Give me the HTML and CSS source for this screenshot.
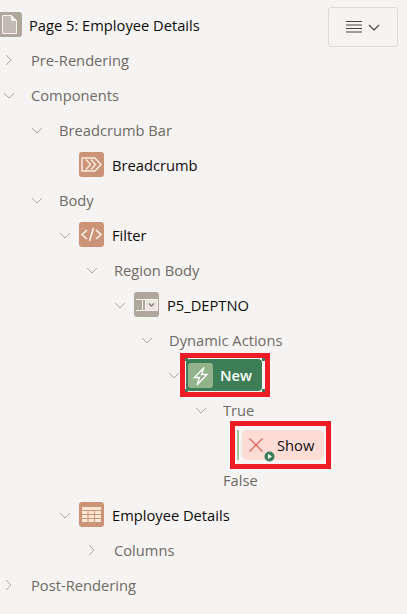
FILE: index.html
```html
<!DOCTYPE html>
<html lang="en">
<head>
<meta charset="UTF-8">
<meta name="viewport" content="width=device-width, initial-scale=1.0">
<title>Page Designer Tree</title>
<link rel="stylesheet" href="styles.css">
</head>
<body>

<div class="tree">
    <button class="menu-btn" type="button">
        <svg width="16" height="12" viewBox="0 0 16 12"><path d="M0 .5h16M0 4h16M0 7.500h16M0 11h16" stroke="#444" fill="none"/></svg>
        <svg width="12" height="7" viewBox="0 0 12 7"><path d="M1 1l5 5 5-5" stroke="#444" stroke-width="1.200" fill="none"/></svg>
    </button>

    <div class="row page-row">
        <span class="icon icon-grey">
            <svg width="25" height="25" viewBox="0 0 25 25"><path d="M5.500 3.500h9l5 5v13h-14z" fill="#c2bbb1" stroke="#f6f3ef"/><path d="M14.500 3.500v5h5" fill="#f6f3ef" stroke="#f6f3ef"/></svg>
        </span>
        <span class="node-name">Page 5: Employee Details</span>
    </div>

    <div class="row lvl-0">
        <svg class="toggle" viewBox="0 0 18 18"><path d="M6 4l5 5-5 5"/></svg>
        <span class="label">Pre-Rendering</span>
    </div>
    <div class="row lvl-0">
        <svg class="toggle" viewBox="0 0 18 18"><path d="M4 7l5 5 5-5"/></svg>
        <span class="label">Components</span>
    </div>
    <div class="row lvl-1">
        <svg class="toggle" viewBox="0 0 18 18"><path d="M4 7l5 5 5-5"/></svg>
        <span class="label">Breadcrumb Bar</span>
    </div>
    <div class="row lvl-2">
        <span class="toggle"></span>
        <span class="icon icon-brown">
            <svg width="25" height="25" viewBox="0 0 25 25" fill="none" stroke="#fbeee0" stroke-width="1.400"><path d="M3 6h13l6 6.500-6 6.500H3z"/><path d="M7 7.500l4.500 5-4.500 5M12 7.500l4.500 5-4.500 5"/></svg>
        </span>
        <span class="node-name">Breadcrumb</span>
    </div>
    <div class="row lvl-1">
        <svg class="toggle" viewBox="0 0 18 18"><path d="M4 7l5 5 5-5"/></svg>
        <span class="label">Body</span>
    </div>
    <div class="row lvl-2">
        <svg class="toggle" viewBox="0 0 18 18"><path d="M4 7l5 5 5-5"/></svg>
        <span class="icon icon-brown">
            <svg width="25" height="25" viewBox="0 0 25 25" fill="none" stroke="#fdf3e8" stroke-width="1.600"><path d="M8 8l-5 4.500 5 4.500M17 8l5 4.500-5 4.500M14.500 6l-4 13"/></svg>
        </span>
        <span class="node-name">Filter</span>
    </div>
    <div class="row lvl-3">
        <svg class="toggle" viewBox="0 0 18 18"><path d="M4 7l5 5 5-5"/></svg>
        <span class="label">Region Body</span>
    </div>
    <div class="row lvl-4">
        <svg class="toggle" viewBox="0 0 18 18"><path d="M4 7l5 5 5-5"/></svg>
        <span class="icon icon-grey">
            <svg width="25" height="25" viewBox="0 0 25 25"><path d="M2 7.500h10M2 18.500h10M8.500 7.500v11" stroke="#f6f3ef" fill="none"/><rect x="11.500" y="7.500" width="12" height="11" fill="#e9e5e0" stroke="#f6f3ef"/><path d="M15 11.500l2.500 2.500 2.500-2.500" stroke="#857c72" stroke-width="1.300" fill="none"/></svg>
        </span>
        <span class="node-name">P5_DEPTNO</span>
    </div>
    <div class="row lvl-5">
        <svg class="toggle" viewBox="0 0 18 18"><path d="M4 7l5 5 5-5"/></svg>
        <span class="label">Dynamic Actions</span>
    </div>
    <div class="row lvl-6">
        <svg class="toggle" viewBox="0 0 18 18"><path d="M4 7l5 5 5-5"/></svg>
        <div class="mark mark-new">
            <span class="pill pill-new">
                <span class="icon icon-green">
                    <svg width="25" height="25" viewBox="0 0 25 25"><path d="M16 4.500L6.500 14.500h5L9 22l10-10.500h-5.500z" fill="none" stroke="#fff" stroke-width="1.300"/></svg>
                </span>
                <span class="pill-text">New</span>
            </span>
        </div>
    </div>
    <div class="row lvl-7">
        <svg class="toggle" viewBox="0 0 18 18"><path d="M4 7l5 5 5-5"/></svg>
        <span class="label">True</span>
    </div>
    <div class="row lvl-8">
        <div class="mark mark-show">
            <span class="action-bar"></span>
            <span class="pill pill-show">
                <svg class="x-icon" width="14" height="14" viewBox="0 0 14 14"><path d="M.5.5l13 13M13.500.5l-13 13" stroke="#d9695c" stroke-width="1.300" fill="none"/></svg>
                <svg class="play-badge" width="11" height="11" viewBox="0 0 11 11"><circle cx="5.500" cy="5.500" r="5" fill="#3a7d5c"/><path d="M4 3l4 2.500L4 8z" fill="#fff"/></svg>
                <span class="show-text">Show</span>
            </span>
        </div>
    </div>
    <div class="row lvl-7">
        <span class="toggle"></span>
        <span class="label">False</span>
    </div>
    <div class="row lvl-2">
        <svg class="toggle" viewBox="0 0 18 18"><path d="M4 7l5 5 5-5"/></svg>
        <span class="icon icon-brown">
            <svg width="25" height="25" viewBox="0 0 25 25"><rect x="3" y="5" width="19" height="15" fill="#fbe9d4"/><path d="M3 8.500h19M3 12.500h19M3 16.500h19M9 8.500V20M15.500 8.500V20" stroke="#cb9478" fill="none"/></svg>
        </span>
        <span class="node-name">Employee Details</span>
    </div>
    <div class="row lvl-3">
        <svg class="toggle" viewBox="0 0 18 18"><path d="M6 4l5 5-5 5"/></svg>
        <span class="label">Columns</span>
    </div>
    <div class="row lvl-0">
        <svg class="toggle" viewBox="0 0 18 18"><path d="M6 4l5 5-5 5"/></svg>
        <span class="label">Post-Rendering</span>
    </div>
</div>

</body>
</html>
```

FILE: styles.css
```css
html, body {
    height: 100%;
}
body {
    margin: 0;
    padding: 0;
    overflow: hidden;
    background-color: #f6f4f2;
    font-family: "Open Sans", "Noto Sans", sans-serif;
    font-size: 14.7px;
}
.tree {
    position: relative;
    padding-top: 7px;
}
.menu-btn {
    position: absolute;
    top: 7px;
    left: 328px;
    width: 70px;
    height: 40px;
    display: flex;
    align-items: center;
    justify-content: center;
    gap: 6px;
    padding: 0;
    background-color: #f6f4f2;
    border: 1px solid #dedbd8;
    border-radius: 3px;
}
.row {
    display: flex;
    align-items: center;
    height: 35px;
}
.page-row {
    margin-left: -3px;
}
.lvl-0 { padding-left: 0; }
.lvl-1 { padding-left: 28px; }
.lvl-2 { padding-left: 56px; }
.lvl-3 { padding-left: 83px; }
.lvl-4 { padding-left: 111px; }
.lvl-5 { padding-left: 138px; }
.lvl-6 { padding-left: 165px; }
.lvl-7 { padding-left: 192px; }
.lvl-8 { padding-left: 230px; }
.toggle {
    flex: none;
    width: 18px;
    height: 18px;
    margin-right: 5px;
    fill: none;
    stroke: #aaa7a3;
    stroke-width: 1;
}
.label {
    margin-left: 8px;
    color: #6f6a65;
}
.node-name {
    margin-left: 8px;
    color: #0d0c0b;
}
.page-row .node-name {
    margin-left: 7px;
}
.icon {
    flex: none;
    width: 25px;
    height: 25px;
    border-radius: 3px;
}
.icon svg {
    display: block;
}
.icon-brown {
    background-color: #cb9478;
}
.icon-grey {
    background-color: #b0a79c;
}
.icon-green {
    background-color: #92b38b;
}
.mark {
    flex: none;
    display: flex;
    align-items: center;
    box-sizing: border-box;
    margin-top: 1px;
    border: 5px solid #ee1c25;
}
.mark-new {
    width: 90px;
    height: 44px;
    margin-left: -8px;
    padding-left: 1px;
    /* little selection handles at the inner corners */
    background:
        linear-gradient(#3d7d58, #3d7d58) left top / 3px 3px no-repeat,
        linear-gradient(#3d7d58, #3d7d58) right top / 3px 3px no-repeat,
        linear-gradient(#3d7d58, #3d7d58) left bottom / 3px 3px no-repeat,
        linear-gradient(#3d7d58, #3d7d58) right bottom / 3px 3px no-repeat,
        #f6f4f2;
}
.mark-show {
    width: 101px;
    height: 48px;
    padding-left: 2px;
}
.pill {
    position: relative;
    display: flex;
    align-items: center;
    box-sizing: border-box;
}
.pill-new {
    width: 76px;
    height: 32px;
    padding-left: 2px;
    background-color: #3d7d58;
    border-radius: 4px;
}
.pill-text {
    margin-left: 7px;
    color: #fff;
    font-weight: 600;
}
.action-bar {
    flex: none;
    width: 2px;
    height: 30px;
    background-color: #a9c4a0;
}
.pill-show {
    width: 82px;
    height: 30px;
    margin-left: 3px;
    background-color: #fddcd6;
    border-radius: 5px;
}
.x-icon {
    margin-left: 7px;
}
.play-badge {
    position: absolute;
    left: 22px;
    top: 21px;
}
.show-text {
    margin-left: 14px;
    color: #0d0c0b;
}
```
